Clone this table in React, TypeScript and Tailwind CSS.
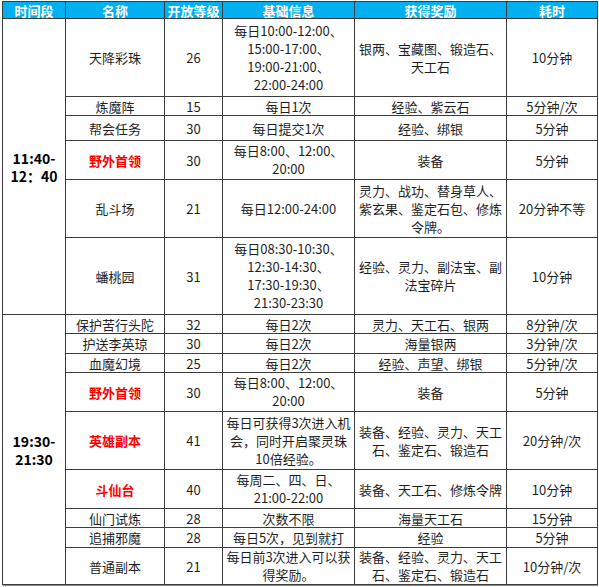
import React from "react";

type Row = {
  name: string;
  red?: boolean;
  level: string;
  info: string[];
  reward: string[];
  time: string;
  h: number;
};

const morning: Row[] = [
  {
    name: "天降彩珠",
    level: "26",
    info: ["每日10:00-12:00、", "15:00-17:00、", "19:00-21:00、", "22:00-24:00"],
    reward: ["银两、宝藏图、锻造石、", "天工石"],
    time: "10分钟",
    h: 78,
  },
  { name: "炼魔阵", level: "15", info: ["每日1次"], reward: ["经验、紫云石"], time: "5分钟/次", h: 19 },
  { name: "帮会任务", level: "30", info: ["每日提交1次"], reward: ["经验、绑银"], time: "5分钟", h: 25 },
  {
    name: "野外首领",
    red: true,
    level: "30",
    info: ["每日8:00、12:00、", "20:00"],
    reward: ["装备"],
    time: "5分钟",
    h: 39,
  },
  {
    name: "乱斗场",
    level: "21",
    info: ["每日12:00-24:00"],
    reward: ["灵力、战功、替身草人、", "紫玄果、鉴定石包、修炼", "令牌。"],
    time: "20分钟不等",
    h: 58,
  },
  {
    name: "蟠桃园",
    level: "31",
    info: ["每日08:30-10:30、", "12:30-14:30、", "17:30-19:30、", "21:30-23:30"],
    reward: ["经验、灵力、副法宝、副", "法宝碎片"],
    time: "10分钟",
    h: 77,
  },
];

const evening: Row[] = [
  { name: "保护苦行头陀", level: "32", info: ["每日2次"], reward: ["灵力、天工石、银两"], time: "8分钟/次", h: 19 },
  { name: "护送李英琼", level: "30", info: ["每日2次"], reward: ["海量银两"], time: "3分钟/次", h: 20 },
  { name: "血魔幻境", level: "25", info: ["每日2次"], reward: ["经验、声望、绑银"], time: "5分钟/次", h: 19 },
  {
    name: "野外首领",
    red: true,
    level: "30",
    info: ["每日8:00、12:00、", "20:00"],
    reward: ["装备"],
    time: "5分钟",
    h: 39,
  },
  {
    name: "英雄副本",
    red: true,
    level: "41",
    info: ["每日可获得3次进入机", "会，同时开启聚灵珠", "10倍经验。"],
    reward: ["装备、经验、灵力、天工", "石、鉴定石、锻造石"],
    time: "20分钟/次",
    h: 58,
  },
  {
    name: "斗仙台",
    red: true,
    level: "40",
    info: ["每周二、四、日、", "21:00-22:00"],
    reward: ["装备、天工石、修炼令牌"],
    time: "10分钟",
    h: 39,
  },
  { name: "仙门试炼", level: "28", info: ["次数不限"], reward: ["海量天工石"], time: "15分钟", h: 19 },
  { name: "追捕邪魔", level: "28", info: ["每日5次，见到就打"], reward: ["经验"], time: "5分钟", h: 20 },
  {
    name: "普通副本",
    level: "21",
    info: ["每日前3次进入可以获", "得奖励。"],
    reward: ["装备、经验、灵力、天工", "石、鉴定石、锻造石"],
    time: "10分钟/次",
    h: 37,
  },
];

const cell = "border border-[#3c3c3c] p-0 text-center align-middle leading-[17px]";

function Lines({ lines }: { lines: string[] }) {
  return (
    <>
      {lines.map((l, i) => (
        <div key={i} className={lines.length > 1 ? "leading-[18px]" : "leading-[17px]"}>
          {l}
        </div>
      ))}
    </>
  );
}

function Group({ label, rows }: { label: string[]; rows: Row[] }) {
  return (
    <>
      {rows.map((r, i) => (
        <tr key={i} style={{ height: r.h }}>
          {i === 0 && (
            <td rowSpan={rows.length} className={`${cell} text-[14px] font-bold text-black`}>
              <Lines lines={label} />
            </td>
          )}
          <td className={`${cell} ${r.red ? "font-bold text-[#ff0000]" : ""}`}>{r.name}</td>
          <td className={cell}>{r.level}</td>
          <td className={cell}>
            <Lines lines={r.info} />
          </td>
          <td className={cell}>
            <Lines lines={r.reward} />
          </td>
          <td className={cell}>{r.time}</td>
        </tr>
      ))}
    </>
  );
}

export default function App() {
  return (
    <div className="min-h-[587px] bg-white pl-[2px] pt-[1px] font-['Noto_Sans_CJK_SC',sans-serif]">
      <div className="w-[595px] shadow-[1px_1px_0_#8a8a8a]">
        <table className="w-[595px] table-fixed border-collapse text-[13px] text-[#1f1f1f]">
          <colgroup>
            <col className="w-[63px]" />
            <col className="w-[99px]" />
            <col className="w-[58px]" />
            <col className="w-[132px]" />
            <col className="w-[152px]" />
            <col className="w-[91px]" />
          </colgroup>
          <thead>
            <tr className="h-[17px] bg-[#00b0f0] font-bold text-white">
              {["时间段", "名称", "开放等级", "基础信息", "获得奖励", "耗时"].map((t) => (
                <th key={t} className="border border-[#3c3c3c] p-0 text-center leading-[15px]">
                  {t}
                </th>
              ))}
            </tr>
          </thead>
          <tbody>
            <Group label={["11:40-", "12：40"]} rows={morning} />
            <Group label={["19:30-", "21:30"]} rows={evening} />
          </tbody>
        </table>
      </div>
    </div>
  );
}
